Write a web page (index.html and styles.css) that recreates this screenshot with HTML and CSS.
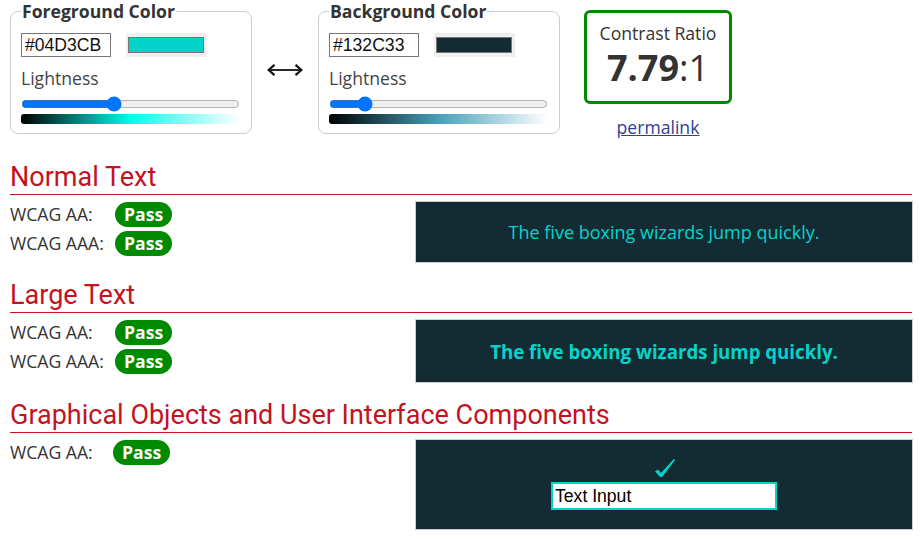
FILE: index.html
```html
<!DOCTYPE html>
<html lang="en">
<head>
<meta charset="utf-8">
<title>Contrast Checker</title>
<link rel="stylesheet" href="styles.css">
</head>
<body>
<div class="top">
  <fieldset class="picker">
    <legend>Foreground Color</legend>
    <div class="hexrow">
      <input class="hex" type="text" value="#04D3CB">
      <span class="swatch"><span class="swatch-in fg-sw"></span></span>
    </div>
    <div class="lbl">Lightness</div>
    <input class="range" type="range" min="0" max="100" value="42">
    <div class="grad fg-grad"></div>
  </fieldset>
  <div class="swap" title="Swap colors">
    <svg width="36" height="12" viewBox="0 0 36 12" aria-hidden="true">
      <path d="M2 6 H34" stroke="#111" stroke-width="1.8" fill="none"/>
      <path d="M7.5 0.8 L1.6 6 L7.5 11.2" stroke="#111" stroke-width="2.2" fill="none" stroke-linejoin="miter"/>
      <path d="M28.5 0.8 L34.4 6 L28.5 11.2" stroke="#111" stroke-width="2.2" fill="none" stroke-linejoin="miter"/>
    </svg>
  </div>
  <fieldset class="picker">
    <legend>Background Color</legend>
    <div class="hexrow">
      <input class="hex" type="text" value="#132C33">
      <span class="swatch"><span class="swatch-in bg-sw"></span></span>
    </div>
    <div class="lbl">Lightness</div>
    <input class="range" type="range" min="0" max="100" value="14">
    <div class="grad bg-grad"></div>
  </fieldset>
  <div class="ratio-col">
    <div class="ratio">
      <div class="ratio-label">Contrast Ratio</div>
      <div class="ratio-val"><b>7.79</b>:1</div>
    </div>
    <a class="permalink" href="#">permalink</a>
  </div>
</div>

<section class="sec">
  <h2>Normal Text</h2>
  <div class="res">
    <div class="checks">
      <div class="row"><span class="lab">WCAG AA:</span><span class="pass">Pass</span></div>
      <div class="row"><span class="lab">WCAG AAA:</span><span class="pass">Pass</span></div>
    </div>
    <div class="preview normal">The five boxing wizards jump quickly.</div>
  </div>
</section>

<section class="sec">
  <h2>Large Text</h2>
  <div class="res">
    <div class="checks">
      <div class="row"><span class="lab">WCAG AA:</span><span class="pass">Pass</span></div>
      <div class="row"><span class="lab">WCAG AAA:</span><span class="pass">Pass</span></div>
    </div>
    <div class="preview large">The five boxing wizards jump quickly.</div>
  </div>
</section>

<section class="sec">
  <h2>Graphical Objects and User Interface Components</h2>
  <div class="res">
    <div class="checks">
      <div class="row"><span class="lab lab-short">WCAG AA:</span><span class="pass">Pass</span></div>
    </div>
    <div class="preview ui">
      <svg class="check" width="20" height="18" viewBox="0 0 20 18" aria-hidden="true">
        <path d="M0 12.5 L3 10.5 L6 14 L18.8 0 L20 1 L7.2 18 L5.2 18 Z" fill="#04D3CB"/>
      </svg>
      <input class="textin" type="text" value="Text Input">
    </div>
  </div>
</section>
</body>
</html>
```
FILE: styles.css
```css
html, body {
  margin: 0;
  padding: 0;
  background: #fff;
}
body {
  padding: 0 9px 0 10px;
  font-family: "Open Sans", "DejaVu Sans", sans-serif;
  font-size: 17.6px;
  line-height: 23px;
  color: #333;
}

.top {
  display: flex;
  align-items: flex-start;
  height: 136px;
}

.picker {
  box-sizing: border-box;
  width: 242px;
  margin: 0;
  padding: 10px 11px 9px 10px;
  border: 1px solid #ccc;
  border-radius: 8px;
  min-width: 0;
}
.picker legend {
  padding: 0 1px;
  font-weight: 700;
  line-height: 23px;
  color: #333;
}

.hexrow {
  display: flex;
  align-items: flex-start;
  gap: 15px;
}
.hex {
  box-sizing: border-box;
  width: 90px;
  height: 24px;
  margin: 0;
  padding: 0 3px;
  border: 1px solid #767676;
  border-radius: 0;
  font-family: "Liberation Sans", Arial, sans-serif;
  font-size: 17.6px;
  color: #111;
  background: #fff;
}
.swatch {
  display: block;
  box-sizing: border-box;
  width: 81px;
  height: 24px;
  padding: 4px 3px 4px 2px;
  background: #efefef;
}
.swatch-in {
  display: block;
  box-sizing: border-box;
  width: 76px;
  height: 16px;
  border: 1px solid #777;
}
.fg-sw { background: #04D3CB; }
.bg-sw { background: #132C33; }

.lbl {
  margin-top: 10px;
  color: #444;
}
.range {
  display: block;
  width: 219px;
  height: 16px;
  margin: 6px 0 0 0;
  padding: 0;
}
.grad {
  width: 219px;
  height: 10px;
  margin-top: 2px;
  border-radius: 3px 0 0 3px;
}
.fg-grad {
  background: linear-gradient(to right, hsl(177, 96%, 0%), hsl(177, 96%, 50%), hsl(177, 96%, 100%));
}
.bg-grad {
  background: linear-gradient(to right, hsl(193, 46%, 0%), hsl(193, 46%, 50%), hsl(193, 46%, 100%));
}

.swap {
  width: 66px;
  display: flex;
  justify-content: center;
  margin-top: 64px;
}
.swap svg {
  display: block;
}

.ratio-col {
  margin-left: 24px;
  margin-top: 10px;
  display: flex;
  flex-direction: column;
  align-items: center;
}
.ratio {
  box-sizing: border-box;
  width: 148px;
  height: 94px;
  border: 3px solid #008a00;
  border-radius: 6px;
  text-align: center;
  padding-top: 9px;
}
.ratio-label {
  line-height: 23px;
}
.ratio-val {
  font-size: 36px;
  line-height: 44px;
  margin-top: 1px;
  color: #333;
}
.ratio-val b {
  font-weight: 700;
}
.permalink {
  margin-top: 12px;
  color: #2e3f94;
  text-decoration: underline;
}

.sec h2 {
  margin: 0;
  font-family: Roboto, "Liberation Sans", sans-serif;
  font-weight: 400;
  font-size: 27px;
  line-height: 30px;
  padding-bottom: 2px;
  border-bottom: 1px solid #c2131f;
  color: #c2131f;
}
.sec:nth-of-type(1) h2 { margin-top: 26px; }
.sec + .sec h2 { margin-top: 17px; }

.res {
  display: grid;
  grid-template-columns: 405px 498px;
}
.checks {
  padding-top: 7px;
  display: flex;
  flex-direction: column;
  gap: 4px;
}
.row {
  display: flex;
  align-items: center;
  height: 25px;
}
.lab {
  width: 105px;
  line-height: 25px;
}
.lab-short {
  width: 103px;
}
.pass {
  display: inline-block;
  height: 25px;
  line-height: 25px;
  padding: 0 9px;
  border-radius: 13px;
  background: #008a00;
  color: #fff;
  font-weight: 700;
}

.preview {
  box-sizing: border-box;
  margin-top: 6px;
  border: 1px solid #ccc;
  background: #132C33;
  color: #04D3CB;
  display: flex;
  align-items: center;
  justify-content: center;
}
.normal {
  height: 62px;
  font-size: 18px;
}
.large {
  height: 64px;
  font-size: 18.67px;
  font-weight: 700;
}
.ui {
  height: 91px;
  flex-direction: column;
  justify-content: flex-start;
  padding-top: 19px;
}
.check {
  display: block;
  width: 20px;
  height: 18px;
  margin-left: 2px;
}
.textin {
  box-sizing: border-box;
  width: 226px;
  height: 28px;
  margin: 5px 0 0 0;
  padding: 0 2px;
  border: 2px solid #04D3CB;
  border-radius: 0;
  background: #fff;
  color: #000;
  font-family: "Liberation Sans", Arial, sans-serif;
  font-size: 17.6px;
}
```
